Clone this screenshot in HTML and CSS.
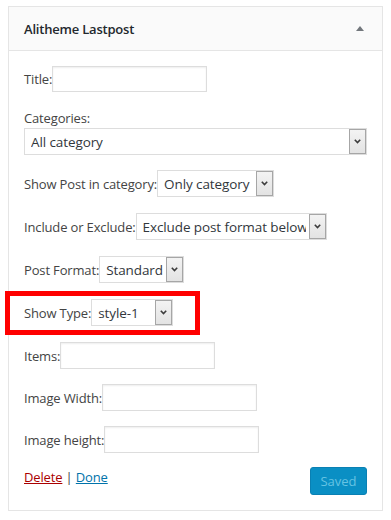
FILE: index.html
```html
<!DOCTYPE html>
<html>
<head>
<meta name="viewport" content="width=device-width, initial-scale=1">
<link rel="stylesheet" href="styles.css">
</head>
<body>

<div class="widget">
  <div class="widget-top">
    <h3 class="widget-title">Alitheme Lastpost</h3>
    <span class="toggle"></span>
  </div>

  <div class="widget-inside">
    <p class="row title-row">
      <label for="title">Title:</label><input type="text" id="title" class="field">
    </p>

    <p class="stack">
      <label for="cats">Categories:</label>
      <span class="select full">
        <select id="cats"><option>All category</option></select>
        <span class="arrow"><svg width="7" height="5" viewBox="0 0 7 5"><path d="M0.8 0.8 L3.5 3.6 L6.2 0.8" fill="none" stroke="#3c3c3c" stroke-width="1.6"/></svg></span>
      </span>
    </p>

    <p class="row">
      <label for="showpost">Show Post in category:</label>
      <span class="select sel-showpost">
        <select id="showpost"><option>Only category</option></select>
        <span class="arrow"><svg width="7" height="5" viewBox="0 0 7 5"><path d="M0.8 0.8 L3.5 3.6 L6.2 0.8" fill="none" stroke="#3c3c3c" stroke-width="1.6"/></svg></span>
      </span>
    </p>

    <p class="row">
      <label for="incl">Include or Exclude:</label>
      <span class="select sel-incl">
        <select id="incl"><option>Exclude post format below</option></select>
        <span class="arrow"><svg width="7" height="5" viewBox="0 0 7 5"><path d="M0.8 0.8 L3.5 3.6 L6.2 0.8" fill="none" stroke="#3c3c3c" stroke-width="1.6"/></svg></span>
      </span>
    </p>

    <p class="row">
      <label for="format">Post Format:</label>
      <span class="select sel-format">
        <select id="format"><option>Standard</option></select>
        <span class="arrow"><svg width="7" height="5" viewBox="0 0 7 5"><path d="M0.8 0.8 L3.5 3.6 L6.2 0.8" fill="none" stroke="#3c3c3c" stroke-width="1.6"/></svg></span>
      </span>
    </p>

    <p class="row highlighted">
      <label for="type">Show Type:</label>
      <span class="select sel-type">
        <select id="type"><option>style-1</option></select>
        <span class="arrow"><svg width="7" height="5" viewBox="0 0 7 5"><path d="M0.8 0.8 L3.5 3.6 L6.2 0.8" fill="none" stroke="#3c3c3c" stroke-width="1.6"/></svg></span>
      </span>
    </p>

    <p class="row tight">
      <label for="items">Items:</label><input type="text" id="items" class="field">
    </p>

    <p class="row tight">
      <label for="imgw">Image Width:</label><input type="text" id="imgw" class="field">
    </p>

    <p class="row last">
      <label for="imgh">Image height:</label><input type="text" id="imgh" class="field">
    </p>

    <div class="actions">
      <div class="links">
        <a href="#" class="delete">Delete</a> | <a href="#" class="done">Done</a>
      </div>
      <button class="button-primary" disabled>Saved</button>
    </div>
  </div>
</div>

</body>
</html>
```

FILE: styles.css
```css
body {
  margin: 0;
  background: #fff;
  font-family: "Open Sans", "Noto Sans", sans-serif;
  font-size: 13px;
  letter-spacing: -0.15px;
  color: #444;
}

.widget {
  margin: 6px 0 0 8px;
  width: 375px;
  box-sizing: border-box;
  border: 1px solid #e5e5e5;
  background: #fff;
}

.widget-top {
  height: 43px;
  display: flex;
  align-items: center;
  justify-content: space-between;
  padding: 0 18px 0 15px;
  background: #fafafa;
  border-bottom: 1px solid #e5e5e5;
}

.widget-title {
  margin: 0;
  font-size: 13px;
  font-weight: 600;
  letter-spacing: -0.2px;
  color: #23282d;
}

.toggle {
  width: 0;
  height: 0;
  border-left: 4px solid transparent;
  border-right: 4px solid transparent;
  border-bottom: 5px solid #72777c;
}

.widget-inside {
  padding: 15px 15px 15px;
}

.widget-inside p {
  margin: 0 0 16px;
}

.row {
  display: flex;
  align-items: center;
  height: 27px;
}

.title-row {
  height: 26px;
}

.title-row .field {
  height: 26px;
}

.widget-inside .tight,
.widget-inside .stack {
  margin-bottom: 15px;
}

.widget-inside .last {
  margin-bottom: 14px;
}

.stack {
  display: flex;
  flex-direction: column;
}

.stack label {
  line-height: 20px;
}

.field {
  box-sizing: border-box;
  width: 155px;
  height: 27px;
  margin: 0;
  padding: 3px 5px;
  border: 1px solid #ddd;
  box-shadow: inset 0 1px 2px rgba(0, 0, 0, .07);
  font: inherit;
}

.select {
  box-sizing: border-box;
  display: inline-flex;
  height: 27px;
  border: 1px solid #ddd;
  background: #fff;
}

.select select {
  appearance: none;
  -webkit-appearance: none;
  flex: 1;
  min-width: 0;
  margin: 0;
  padding: 0 3px 0 6px;
  border: none;
  background: transparent;
  font-family: inherit;
  font-size: 13.5px;
  letter-spacing: -0.1px;
  color: #32373c;
  outline: none;
}

.select .arrow {
  box-sizing: border-box;
  width: 17px;
  display: flex;
  align-items: center;
  justify-content: center;
  border: 1px solid #a6a6a6;
  background: linear-gradient(#f3f3f3, #e3e3e3);
}

.full { display: flex; width: 100%; }
.sel-showpost { width: 117px; }
.sel-incl { width: 191px; }
.sel-format { width: 85px; }
.sel-type { width: 82px; }

.highlighted {
  position: relative;
}

.highlighted::after {
  content: "";
  position: absolute;
  left: -19px;
  top: -8px;
  width: 195px;
  height: 44px;
  box-sizing: border-box;
  border: 5px solid #f00;
  pointer-events: none;
}

.actions {
  display: flex;
  justify-content: space-between;
  align-items: flex-start;
}

.links {
  line-height: 20px;
  font-size: 13px;
  color: #444;
}

.links a {
  text-decoration: underline;
}

.delete { color: #a00; }
.done { color: #0073aa; }

.button-primary {
  width: 57px;
  height: 28px;
  padding: 0;
  border: 1px solid #0a80b3;
  border-radius: 3px;
  background: #0a8fc4;
  color: #66c3e3;
  font-family: inherit;
  font-size: 13px;
}
```
